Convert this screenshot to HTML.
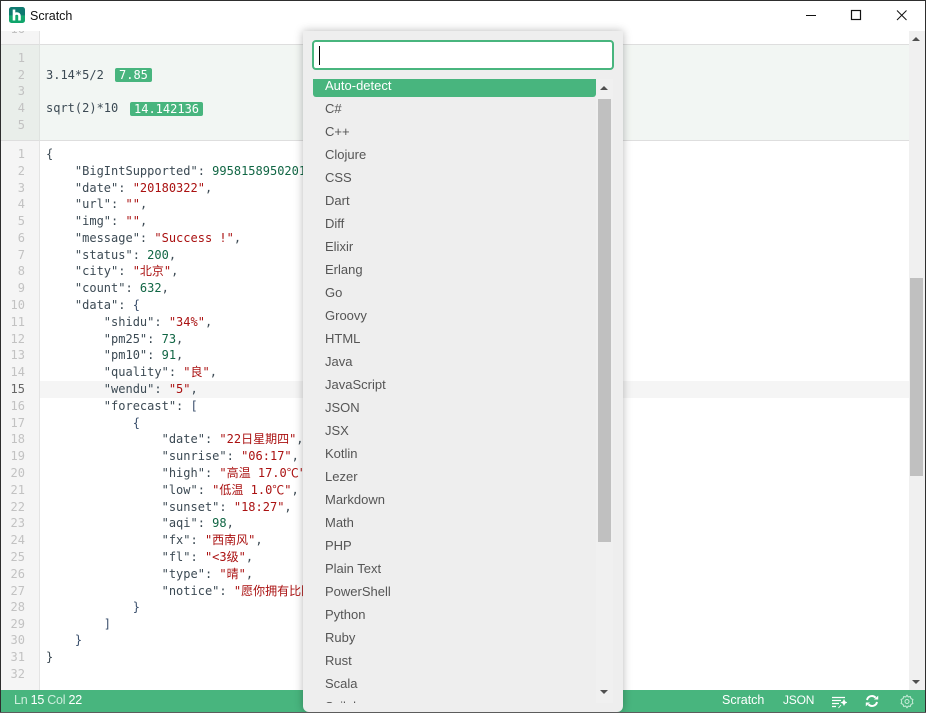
<!DOCTYPE html>
<html><head><meta charset="utf-8">
<style>
html,body{margin:0;padding:0;background:#fff}
body{width:926px;height:713px;overflow:hidden;position:relative;font-family:"Liberation Sans","Noto Sans CJK SC",sans-serif}
.a{position:absolute}
#frameT{left:0;top:0;width:926px;height:1px;background:#2e2e2e;z-index:9}
#frameL{left:0;top:0;width:1px;height:713px;background:#2e2e2e;z-index:9}
#frameR{left:925px;top:0;width:1px;height:713px;background:#2e2e2e;z-index:9}
#frameB{left:0;top:712px;width:926px;height:1px;background:#5c5c5c;z-index:9}
#bar{left:0;top:0;width:926px;height:31px;background:#fff;z-index:2}
#title{left:30px;top:8px;font-size:12.5px;line-height:16px;color:#111;z-index:3}
#ed{left:1px;top:30px;width:908px;height:660px;overflow:hidden;background:#fff}
#gut{left:1px;top:30px;width:38px;height:660px;background:#f5f5f5;border-right:1px solid #e4e4e4;box-sizing:content-box}
.c,.n{font-family:"DejaVu Sans Mono","Noto Sans CJK SC",monospace;font-size:12px;line-height:16.8px;white-space:pre}
.n{left:1px;width:24px;text-align:right;color:#c2c2c2;position:absolute}
.c{position:absolute;left:46px;color:#3c4a54}
.s{color:#a11}.d{color:#164}.b{color:#3a4f6c}
#mb{left:1px;top:44px;width:908px;height:97px;background:#f2f6f3;border-top:1px solid #dedede;border-bottom:1px solid #dedede;box-sizing:border-box}
#mg{left:1px;top:44px;width:39px;height:97px;background:#e9eeea;border-top:1px solid #dedede;border-bottom:1px solid #dedede;border-right:1px solid #dfe3e0;box-sizing:border-box}
.p{position:absolute;background:#48b57e;color:#fff;border-radius:2px;height:14px;line-height:14px;padding:0 4px;font-family:"DejaVu Sans Mono",monospace;font-size:12px;white-space:pre}
#act{left:40px;top:381px;width:869px;height:17px;background:#f5f5f5}
#sb{left:909px;top:30px;width:16px;height:660px;background:#f0f0f0}
#th{left:910px;top:278px;width:13px;height:198px;background:#c0c0c0}
#st{left:1px;top:690px;width:924px;height:22px;background:#48b57e;color:#fff;font-size:12.5px;line-height:21px}
#st .t{position:absolute;top:0;white-space:pre}
#st i{font-style:normal;color:#cdeedd}
#pop{left:303px;top:31px;width:320px;height:681px;background:#eee;border-radius:0 0 6px 6px;box-shadow:0 0 9px rgba(0,0,0,.28);z-index:5}
#inp{left:9px;top:9px;width:302px;height:30px;box-sizing:border-box;background:#fff;border:2px solid #48b57e;border-radius:4px}
#cur{left:16px;top:15px;width:1px;height:19px;background:#000}
#list{left:10px;top:48px;width:283px;height:624px;overflow:hidden}
.it{position:absolute;left:12px;font-size:13px;line-height:18px;color:#555;white-space:pre}
#sel{left:0;top:0;width:283px;height:18px;background:#48b57e;border-radius:0 0 3px 3px}
#strk{left:293px;top:48px;width:17px;height:624px;background:#f0f0f0}
#sth{left:295px;top:68px;width:13px;height:443px;background:#c0c0c0}
.up{position:absolute;width:0;height:0;border-left:4px solid transparent;border-right:4px solid transparent;border-bottom:4px solid #505050}
.dn{position:absolute;width:0;height:0;border-left:4px solid transparent;border-right:4px solid transparent;border-top:4px solid #505050}
</style></head><body>
<div class="a" id="frameT"></div><div class="a" id="frameL"></div><div class="a" id="frameR"></div><div class="a" id="frameB"></div>

<div class="a" id="ed"></div>
<div class="a" id="gut"></div>
<div class="a" id="act"></div>
<div class="n" style="top:21px">16</div>
<div class="a" id="bar"></div>

<svg class="a" style="left:9px;top:7px;z-index:3" width="16" height="16" viewBox="0 0 16 16">
<defs><linearGradient id="g" x1="0" y1="0" x2="0" y2="1"><stop offset="0" stop-color="#0f7a70"/><stop offset=".5" stop-color="#0f7a70"/><stop offset=".55" stop-color="#16a86f"/><stop offset="1" stop-color="#0ea46a"/></linearGradient></defs>
<rect width="16" height="16" rx="2.5" fill="url(#g)"/>
<path d="M5 2.5V13.5M5 8c.6-1 1.5-1.5 2.8-1.5 1.6 0 2.7 1 2.7 2.6V13.5" fill="none" stroke="#fff" stroke-width="2.6"/></svg>
<div class="a" id="title">Scratch</div>

<svg class="a" style="left:800px;top:8px;z-index:3" width="110" height="16" viewBox="0 0 110 16">
<path d="M6 7.5H16" stroke="#111" stroke-width="1" fill="none"/>
<rect x="51.5" y="2.5" width="9" height="9" stroke="#111" stroke-width="1.2" fill="none"/>
<path d="M97 2.5L106.5 12M106.5 2.5L97 12" stroke="#111" stroke-width="1" fill="none"/>
</svg>

<div class="a" id="mb"></div>
<div class="a" id="mg"></div>
<div class="n" style="top:50px">1</div>
<div class="n" style="top:67px">2</div>
<div class="n" style="top:83px">3</div>
<div class="n" style="top:100px">4</div>
<div class="n" style="top:117px">5</div>
<div class="c" style="top:67px">3.14*5/2</div>
<div class="p" style="left:115px;top:68px">7.85</div>
<div class="c" style="top:100px">sqrt(2)*10</div>
<div class="p" style="left:130px;top:102px">14.142136</div>

<div class="n" style="top:146px">1</div><div class="c" style="top:146px">{</div>
<div class="n" style="top:163px">2</div><div class="c" style="top:163px">    "BigIntSupported": <span class="d">995815895020152320</span>,</div>
<div class="n" style="top:180px">3</div><div class="c" style="top:180px">    "date": <span class="s">"20180322"</span>,</div>
<div class="n" style="top:196px">4</div><div class="c" style="top:196px">    "url": <span class="s">""</span>,</div>
<div class="n" style="top:213px">5</div><div class="c" style="top:213px">    "img": <span class="s">""</span>,</div>
<div class="n" style="top:230px">6</div><div class="c" style="top:230px">    "message": <span class="s">"Success !"</span>,</div>
<div class="n" style="top:247px">7</div><div class="c" style="top:247px">    "status": <span class="d">200</span>,</div>
<div class="n" style="top:263px">8</div><div class="c" style="top:263px">    "city": <span class="s">"北京"</span>,</div>
<div class="n" style="top:280px">9</div><div class="c" style="top:280px">    "count": <span class="d">632</span>,</div>
<div class="n" style="top:297px">10</div><div class="c" style="top:297px">    "data": <span class="b">{</span></div>
<div class="n" style="top:314px">11</div><div class="c" style="top:314px">        "shidu": <span class="s">"34%"</span>,</div>
<div class="n" style="top:331px">12</div><div class="c" style="top:331px">        "pm25": <span class="d">73</span>,</div>
<div class="n" style="top:347px">13</div><div class="c" style="top:347px">        "pm10": <span class="d">91</span>,</div>
<div class="n" style="top:364px">14</div><div class="c" style="top:364px">        "quality": <span class="s">"良"</span>,</div>
<div class="n" style="top:381px;color:#666">15</div><div class="c" style="top:381px">        "wendu": <span class="s">"5"</span>,</div>
<div class="n" style="top:398px">16</div><div class="c" style="top:398px">        "forecast": <span class="b">[</span></div>
<div class="n" style="top:415px">17</div><div class="c" style="top:415px">            <span class="b">{</span></div>
<div class="n" style="top:431px">18</div><div class="c" style="top:431px">                "date": <span class="s">"22日星期四"</span>,</div>
<div class="n" style="top:448px">19</div><div class="c" style="top:448px">                "sunrise": <span class="s">"06:17"</span>,</div>
<div class="n" style="top:465px">20</div><div class="c" style="top:465px">                "high": <span class="s">"高温 17.0℃"</span>,</div>
<div class="n" style="top:482px">21</div><div class="c" style="top:482px">                "low": <span class="s">"低温 1.0℃"</span>,</div>
<div class="n" style="top:499px">22</div><div class="c" style="top:499px">                "sunset": <span class="s">"18:27"</span>,</div>
<div class="n" style="top:515px">23</div><div class="c" style="top:515px">                "aqi": <span class="d">98</span>,</div>
<div class="n" style="top:532px">24</div><div class="c" style="top:532px">                "fx": <span class="s">"西南风"</span>,</div>
<div class="n" style="top:549px">25</div><div class="c" style="top:549px">                "fl": <span class="s">"&lt;3级"</span>,</div>
<div class="n" style="top:566px">26</div><div class="c" style="top:566px">                "type": <span class="s">"晴"</span>,</div>
<div class="n" style="top:583px">27</div><div class="c" style="top:583px">                "notice": <span class="s">"愿你拥有比阳光明媚的心情"</span></div>
<div class="n" style="top:599px">28</div><div class="c" style="top:599px">            <span class="b">}</span></div>
<div class="n" style="top:616px">29</div><div class="c" style="top:616px">        <span class="b">]</span></div>
<div class="n" style="top:632px">30</div><div class="c" style="top:632px">    <span class="b">}</span></div>
<div class="n" style="top:649px">31</div><div class="c" style="top:649px">}</div>
<div class="n" style="top:666px">32</div>

<div class="a" id="sb"></div>
<div class="a" id="th"></div>
<div class="up" style="left:912px;top:37px;z-index:3"></div>
<div class="dn" style="left:912px;top:680px"></div>

<div class="a" id="st">
<div class="t" style="left:13px;letter-spacing:-.25px"><i>Ln</i> 15 <i>Col</i> 22</div>
<div class="t" style="left:721px">Scratch</div>
<div class="t" style="left:782px;font-size:12px;letter-spacing:-.2px">JSON</div>
<svg class="a" style="left:830px;top:5px" width="16" height="14" viewBox="0 0 16 14"><path d="M1 2.5H14M1 5.5H10M1 8.5H8M1 11.5H5" stroke="#fff" stroke-width="1.2" fill="none"/><path d="M13 5l.8 1.7 1.7.8-1.7.8-.8 1.7-.8-1.7-1.7-.8 1.7-.8zM10 10l-2.5 3" stroke="#fff" stroke-width=".9" fill="#fff"/></svg>
<svg class="a" style="left:864px;top:4px" width="14" height="14" viewBox="0 0 14 14"><path d="M2 6a5 5 0 0 1 8.6-2.3M12 8a5 5 0 0 1-8.6 2.3" stroke="#fff" stroke-width="2" fill="none"/><path d="M9 5.5h4.2V1.6zM5 8.5H.8v3.9z" fill="#fff"/></svg>
<svg class="a" style="left:899px;top:4px" width="14" height="15" viewBox="0 0 14 15"><path d="M7 1.2l1.2 1.7 2.1-.3.7 2 1.9.9-.6 2 .6 2-1.9.9-.7 2-2.1-.3L7 13.8l-1.2-1.7-2.1.3-.7-2-1.9-.9.6-2-.6-2 1.9-.9.7-2 2.1.3z" stroke="#c8ecd9" stroke-width="1" fill="none"/><circle cx="7" cy="7.5" r="2" stroke="#c8ecd9" stroke-width="1" fill="none"/></svg>
</div>

<div class="a" id="pop">
<div class="a" id="inp"></div>
<div class="a" id="cur"></div>
<div class="a" id="list">
<div class="a" id="sel"></div>
<div class="it" style="top:-2px;left:12px;color:#fff">Auto-detect</div>
<div class="it" style="top:21px">C#</div>
<div class="it" style="top:44px">C++</div>
<div class="it" style="top:67px">Clojure</div>
<div class="it" style="top:90px">CSS</div>
<div class="it" style="top:113px">Dart</div>
<div class="it" style="top:136px">Diff</div>
<div class="it" style="top:159px">Elixir</div>
<div class="it" style="top:182px">Erlang</div>
<div class="it" style="top:205px">Go</div>
<div class="it" style="top:228px">Groovy</div>
<div class="it" style="top:251px">HTML</div>
<div class="it" style="top:274px">Java</div>
<div class="it" style="top:297px">JavaScript</div>
<div class="it" style="top:320px">JSON</div>
<div class="it" style="top:343px">JSX</div>
<div class="it" style="top:366px">Kotlin</div>
<div class="it" style="top:389px">Lezer</div>
<div class="it" style="top:412px">Markdown</div>
<div class="it" style="top:435px">Math</div>
<div class="it" style="top:458px">PHP</div>
<div class="it" style="top:481px">Plain Text</div>
<div class="it" style="top:504px">PowerShell</div>
<div class="it" style="top:527px">Python</div>
<div class="it" style="top:550px">Ruby</div>
<div class="it" style="top:573px">Rust</div>
<div class="it" style="top:596px">Scala</div>
<div class="it" style="top:619px">Scilab</div>
</div>
<div class="a" id="strk"></div>
<div class="a" id="sth"></div>
<div class="up" style="left:297px;top:55px"></div>
<div class="dn" style="left:297px;top:659px"></div>
</div>
</body></html>
